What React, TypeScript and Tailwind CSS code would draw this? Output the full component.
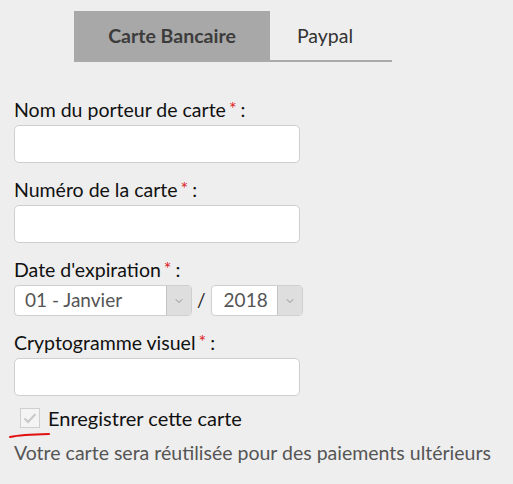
import { ChevronDown } from "lucide-react";

function Label({ children }: { children: string }) {
  return (
    <label className="block text-[19.5px] leading-[24px] text-[#111]">
      {children}
      <span className="ml-[3px] text-[#e02020] text-[18px] align-top leading-[20px]">*</span>
      <span className="ml-[4px]">:</span>
    </label>
  );
}

function TextInput() {
  return (
    <input
      type="text"
      className="block w-[286px] h-[38px] rounded-[5px] border border-[#cfcfcf] bg-white px-2 outline-none"
    />
  );
}

function Select({ value, width, pad }: { value: string; width: string; pad: string }) {
  return (
    <div className={`flex h-[31px] rounded-[4px] border border-[#cfcfcf] bg-white overflow-hidden ${width}`}>
      <div className={`flex-1 flex items-center text-[19px] text-[#555] ${pad}`}>{value}</div>
      <div className="w-[25px] flex items-center justify-center bg-[#dedede] border-l border-[#c4c4c4]">
        <ChevronDown size={12} strokeWidth={1.5} className="text-[#777]" />
      </div>
    </div>
  );
}

export default function App() {
  return (
    <div className="min-h-screen w-[513px] bg-[#eeeeee] font-['Lato',sans-serif] pt-[11px]">
      <div className="ml-[74px] w-[318px] flex border-b-2 border-[#aaaaaa]">
        <div className="w-[196px] h-[49px] bg-[#a8a8a8] flex items-center justify-center text-[19.5px] font-bold text-[#3c3c3c]">
          Carte Bancaire
        </div>
        <div className="w-[122px] h-[49px] flex items-center justify-center text-[19.5px] text-[#333] -ml-[6px]">
          Paypal
        </div>
      </div>

      <div className="px-[14px] pt-[36px]">
        <Label>Nom du porteur de carte</Label>
        <div className="mt-[3px]"><TextInput /></div>

        <div className="mt-[15px]"><Label>Numéro de la carte</Label></div>
        <div className="mt-[3px]"><TextInput /></div>

        <div className="mt-[15px]"><Label>Date d'expiration</Label></div>
        <div className="mt-[3px] flex items-center">
          <Select value="01 - Janvier" width="w-[178px]" pad="pl-[10px]" />
          <span className="mx-[5px] text-[19px] text-[#222]">/</span>
          <Select value="2018" width="w-[92px]" pad="pl-[12px]" />
        </div>

        <div className="mt-[15px]"><Label>Cryptogramme visuel</Label></div>
        <div className="mt-[3px]"><TextInput /></div>

        <div className="mt-[10px] h-[24px] flex items-center ml-[6px]">
          <div className="w-[20px] h-[20px] border border-[#cfcfcf] bg-[#f4f4f4] flex items-center justify-center">
            <svg width="14" height="12" viewBox="0 0 14 12">
              <path d="M1.5 6.5 L5 10 L12.5 2" fill="none" stroke="#c8c8c8" strokeWidth="2" />
            </svg>
          </div>
          <span className="ml-[8px] text-[20px] leading-[24px] text-[#111]">Enregistrer cette carte</span>
        </div>
        <div className="relative">
          <svg className="absolute left-[-5px] top-[1px]" width="42" height="8" viewBox="0 0 42 8">
            <path d="M1 6 Q 12 3.5 40 3" fill="none" stroke="#e01010" strokeWidth="2" strokeLinecap="round" />
          </svg>
        </div>
        <p className="mt-[11px] text-[19.5px] leading-[24px] text-[#555]">Votre carte sera réutilisée pour des paiements ultérieurs</p>
      </div>
    </div>
  );
}
